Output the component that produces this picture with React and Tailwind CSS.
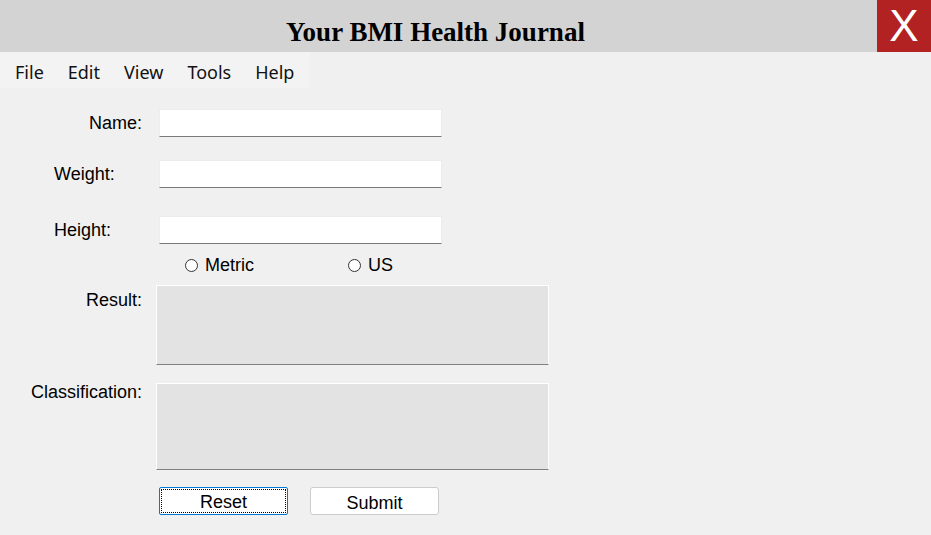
import React, { useState } from "react";

const arial = "font-['Liberation_Sans',Arial,sans-serif]";

const Field = ({ value, onChange }) => (
  <input
    type="text"
    value={value}
    onChange={(e) => onChange(e.target.value)}
    className="w-[283px] h-[28px] bg-white border border-[#ececec] border-b-[#7a7a7a] outline-none px-1 text-[17px]"
  />
);

const Radio = ({ checked, onClick, label, className }) => (
  <label onClick={onClick} className={`flex items-center cursor-default ${className}`}>
    <span className="w-[13px] h-[13px] rounded-full border border-[#333] bg-white flex items-center justify-center">
      {checked && <span className="w-[5px] h-[5px] rounded-full bg-[#333]" />}
    </span>
    <span className="ml-[7px] text-[18px] leading-none">{label}</span>
  </label>
);

const OutBox = ({ className }) => (
  <div className={`w-[393px] bg-[#e3e3e3] border border-white border-b-[#808080] ${className}`} />
);

export default function App() {
  const [name, setName] = useState("");
  const [weight, setWeight] = useState("");
  const [height, setHeight] = useState("");
  const [unit, setUnit] = useState("");

  return (
    <div className={`w-[931px] h-[535px] bg-[#f0f0f0] overflow-hidden ${arial} text-black`}>
      {/* Title bar */}
      <div className="flex h-[52px] bg-[#d3d3d3]">
        <div className="flex-1 flex items-end justify-center pb-[3px] pr-[6px]">
          <h1 className="font-['Liberation_Serif','Times_New_Roman',serif] font-bold text-[27px] leading-[34px]">
            Your BMI Health Journal
          </h1>
        </div>
        <button className="w-[54px] h-[52px] bg-[#b22222] text-white text-[44px] leading-none flex items-center justify-center">
          X
        </button>
      </div>

      {/* Menu bar */}
      <div className="flex">
        <div className="flex items-center h-[36px] w-[310px] bg-[#f3f3f3] pl-[15px] pt-[4px] gap-[24px] font-['Noto_Sans',sans-serif] text-[18px] text-[#111]">
          <span>File</span>
          <span>Edit</span>
          <span>View</span>
          <span>Tools</span>
          <span>Help</span>
        </div>
      </div>

      {/* Form */}
      <div className="pt-[21px] text-[18px]">
        <div className="flex items-center">
          <div className="w-[142px] text-right">Name:</div>
          <div className="ml-[17px]">
            <Field value={name} onChange={setName} />
          </div>
        </div>

        <div className="flex items-center mt-[23px]">
          <div className="w-[159px] pl-[54px]">Weight:</div>
          <Field value={weight} onChange={setWeight} />
        </div>

        <div className="flex items-center mt-[28px]">
          <div className="w-[159px] pl-[54px]">Height:</div>
          <Field value={height} onChange={setHeight} />
        </div>

        <div className="flex items-center h-[14px] mt-[14px] pl-[185px]">
          <Radio checked={unit === "metric"} onClick={() => setUnit("metric")} label="Metric" className="w-[163px]" />
          <Radio checked={unit === "us"} onClick={() => setUnit("us")} label="US" />
        </div>

        <div className="flex mt-[13px]">
          <div className="w-[142px] text-right pt-[2px]">Result:</div>
          <OutBox className="ml-[14px] h-[80px]" />
        </div>

        <div className="flex mt-[18px]">
          <div className="w-[142px] text-right mt-[-4px]">Classification:</div>
          <OutBox className="ml-[14px] h-[87px]" />
        </div>

        <div className="flex mt-[17px] pl-[159px] gap-[22px]">
          <button
            onClick={() => {
              setName("");
              setWeight("");
              setHeight("");
              setUnit("");
            }}
            className="w-[129px] h-[28px] bg-white border border-[#0078d7] rounded-[2px] p-[1px]"
          >
            <div className="h-full border border-dotted border-black flex items-center justify-center text-[18px] pt-[2px]">
              Reset
            </div>
          </button>
          <button className="w-[129px] h-[28px] bg-white border border-[#cccccc] rounded-[3px] text-[18px] pt-[2px]">
            Submit
          </button>
        </div>
      </div>
    </div>
  );
}
